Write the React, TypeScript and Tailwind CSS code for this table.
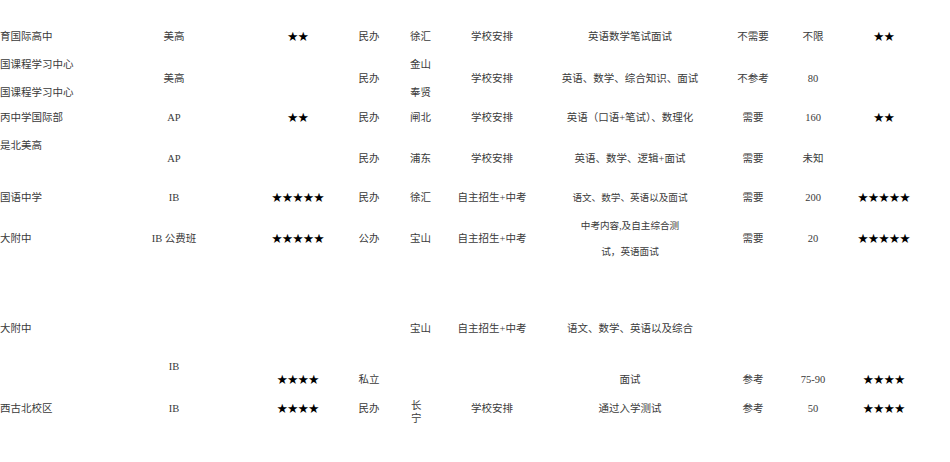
import React from "react";

const cols =
  "grid grid-cols-[100px_148px_100px_42px_62px_80px_196px_50px_70px_72px]";

const C = ({ children, className = "" }: { children?: React.ReactNode; className?: string }) => (
  <div className={`flex items-center justify-center text-center whitespace-nowrap ${className}`}>{children}</div>
);
const N = ({ children, className = "" }: { children?: React.ReactNode; className?: string }) => (
  <div className={`flex flex-col justify-center items-start whitespace-nowrap ${className}`}>{children}</div>
);
const D = ({ children, className = "" }: { children?: React.ReactNode; className?: string }) => (
  <div className={`flex flex-col justify-center items-start pl-[20px] whitespace-nowrap ${className}`}>{children}</div>
);
const S = ({ n }: { n: number }) => (
  <span className="text-black text-[10.5px] tracking-[0px]">{"★".repeat(n)}</span>
);

export default function App() {
  return (
    <div
      className="w-[950px] h-[462px] bg-white overflow-hidden text-[#3a3a3a] text-[10.5px] leading-[20px]"
      style={{ fontFamily: '"Liberation Serif", "Noto Sans CJK SC", serif' }}
    >
      <div className="h-[23px]" />
      {/* R1 */}
      <div className={`${cols} h-[28px]`}>
        <N>育国际高中</N>
        <C>美高</C>
        <C><S n={2} /></C>
        <C>民办</C>
        <D>徐汇</D>
        <C>学校安排</C>
        <C>英语数学笔试面试</C>
        <C>不需要</C>
        <C>不限</C>
        <C><S n={2} /></C>
      </div>
      {/* R2 */}
      <div className={`${cols} h-[54px]`}>
        <N className="leading-[28px]">
          <span>国课程学习中心</span>
          <span>国课程学习中心</span>
        </N>
        <C>美高</C>
        <C />
        <C>民办</C>
        <D className="leading-[28px]">
          <span>金山</span>
          <span>奉贤</span>
        </D>
        <C>学校安排</C>
        <C>英语、数学、综合知识、面试</C>
        <C>不参考</C>
        <C>80</C>
        <C />
      </div>
      {/* R3 */}
      <div className={`${cols} h-[26px]`}>
        <N>丙中学国际部</N>
        <C>AP</C>
        <C><S n={2} /></C>
        <C>民办</C>
        <D>闸北</D>
        <C>学校安排</C>
        <C>英语（口语+笔试）、数理化</C>
        <C>需要</C>
        <C>160</C>
        <C><S n={2} /></C>
      </div>
      {/* R4 */}
      <div className={`${cols} h-[56px]`}>
        <N className="leading-[27px]">
          <span>是北美高</span>
          <span>&nbsp;</span>
        </N>
        <C>AP</C>
        <C />
        <C>民办</C>
        <D>浦东</D>
        <C>学校安排</C>
        <C>英语、数学、逻辑+面试</C>
        <C>需要</C>
        <C>未知</C>
        <C />
      </div>
      {/* R5 */}
      <div className={`${cols} h-[22px]`}>
        <N>国语中学</N>
        <C>IB</C>
        <C><S n={5} /></C>
        <C>民办</C>
        <D>徐汇</D>
        <C>自主招生+中考</C>
        <C className="text-[9.6px]">语文、数学、英语以及面试</C>
        <C>需要</C>
        <C>200</C>
        <C><S n={5} /></C>
      </div>
      {/* R6 */}
      <div className={`${cols} h-[60px]`}>
        <N>大附中</N>
        <C>IB 公费班</C>
        <C><S n={5} /></C>
        <C>公办</C>
        <D>宝山</D>
        <C>自主招生+中考</C>
        <div className="flex flex-col items-center justify-center text-[9.6px] leading-[26px] whitespace-nowrap">
          <span>中考内容,及自主综合测</span>
          <span>试，英语面试</span>
        </div>
        <C>需要</C>
        <C>20</C>
        <C><S n={5} /></C>
      </div>
      <div className="h-[46px]" />
      {/* R7 */}
      <div className={`${cols} h-[28px]`}>
        <N>大附中</N>
        <C />
        <C />
        <C />
        <D>宝山</D>
        <C>自主招生+中考</C>
        <C>语文、数学、英语以及综合</C>
        <C />
        <C />
        <C />
      </div>
      <div className="h-[14px]" />
      {/* R8 */}
      <div className={`${cols} h-[36px]`}>
        <N />
        <C className="self-start">IB</C>
        <C className="self-end leading-[26px]"><S n={4} /></C>
        <C className="self-end leading-[26px]">私立</C>
        <D />
        <C />
        <C className="self-end leading-[26px]">面试</C>
        <C className="self-end leading-[26px]">参考</C>
        <C className="self-end leading-[26px]">75-90</C>
        <C className="self-end leading-[26px]"><S n={4} /></C>
      </div>
      {/* R9 */}
      <div className={`${cols} h-[24px]`}>
        <N>西古北校区</N>
        <C>IB</C>
        <C><S n={4} /></C>
        <C>民办</C>
        <div className="flex flex-col items-start self-start pl-[21px] pt-[6px] leading-[13px]">
          <span>长</span>
          <span>宁</span>
        </div>
        <C>学校安排</C>
        <C>通过入学测试</C>
        <C>参考</C>
        <C>50</C>
        <C><S n={4} /></C>
      </div>
    </div>
  );
}
